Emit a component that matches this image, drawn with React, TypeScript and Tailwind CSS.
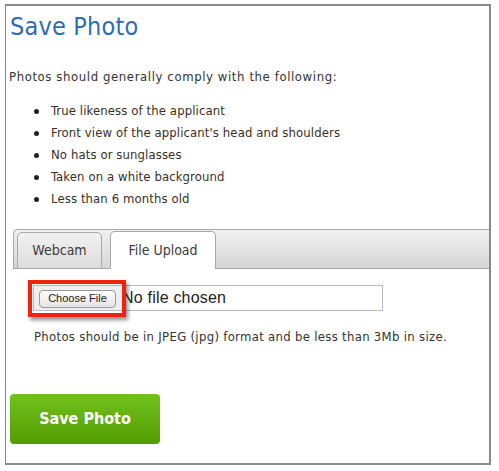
import React from 'react';

const bullets = [
  'True likeness of the applicant',
  "Front view of the applicant's head and shoulders",
  'No hats or sunglasses',
  'Taken on a white background',
  'Less than 6 months old',
];

export default function App() {
  return (
    <div className="w-[499px] h-[471px] bg-white overflow-hidden pl-[5px] pt-[4px] font-['DejaVu_Sans_Condensed','Liberation_Sans',sans-serif]">
      <div className="w-[486px] h-[461px] border-t-2 border-r-2 border-b-2 border-l border-[#8a8a8a] flex flex-col">
        <h1 className="mt-[6px] ml-[4px] text-[25px] leading-[30px] text-[#2e6db2] tracking-[0.2px]">
          Save Photo
        </h1>

        <p className="mt-[26px] ml-[3px] text-[13px] leading-[18px] text-[#333] tracking-[0.6px]">
          Photos should generally comply with the following:
        </p>

        <ul className="mt-[14px] ml-[28px] text-[13px] leading-[22px] text-[#3a2f1f] tracking-[0.1px]">
          {bullets.map((b) => (
            <li key={b} className="flex items-center">
              <span className="w-[5px] h-[5px] rounded-full bg-[#222] mr-[12px]" />
              {b}
            </li>
          ))}
        </ul>

        <div className="mt-[19px] ml-[7px] h-[40px] rounded-tl-[5px] border border-r-0 border-[#a8a8a8] bg-gradient-to-b from-[#f0f0f0] to-[#d6d6d6] flex items-end gap-[8px] pl-[3px]">
          <div className="w-[85px] h-[37px] -mb-px rounded-t-[5px] border border-[#a8a8a8] bg-gradient-to-b from-[#f2f2f2] to-[#dcdcdc] flex items-center justify-center text-[14px] text-[#3a3a3a]">
            Webcam
          </div>
          <div className="w-[106px] h-[38px] -mb-px rounded-t-[5px] border border-b-0 border-[#a8a8a8] bg-white flex items-center justify-center text-[14px] text-[#3a3a3a]">
            File Upload
          </div>
        </div>

        <div className="mt-[16px] ml-[27px] w-[350px] h-[26px] border border-[#b8b8c8] bg-white flex items-center relative font-['Liberation_Sans',sans-serif]">
          <div className="w-[88px] h-full bg-[#eeeeee] flex items-center pl-[5px] pt-[1px]">
            <div className="w-[77px] h-[18px] rounded-[4px] border border-[#9a9a9a] bg-gradient-to-b from-white to-[#e4e4e4] flex items-center justify-center text-[11px] text-[#222]">
              Choose File
            </div>
          </div>
          <span className="text-[16px] leading-[22px] text-[#222] tracking-[0.2px]">No file chosen</span>
          {/* red highlight drawn over the file input */}
          <div className="absolute -left-[6px] -top-[6px] w-[98px] h-[37px] border-[4px] border-[#ee2211] shadow-[2px_3px_4px_rgba(0,0,0,0.45)]" />
        </div>

        <p className="mt-[17px] ml-[28px] text-[13px] leading-[18px] text-[#333] tracking-[0.3px]">
          Photos should be in JPEG (jpg) format and be less than 3Mb in size.
        </p>

        <button className="mt-[48px] ml-[4px] w-[150px] h-[50px] rounded-[4px] bg-gradient-to-b from-[#72c21c] to-[#529c00] text-white text-[16px] font-bold">
          Save Photo
        </button>
      </div>
    </div>
  );
}
